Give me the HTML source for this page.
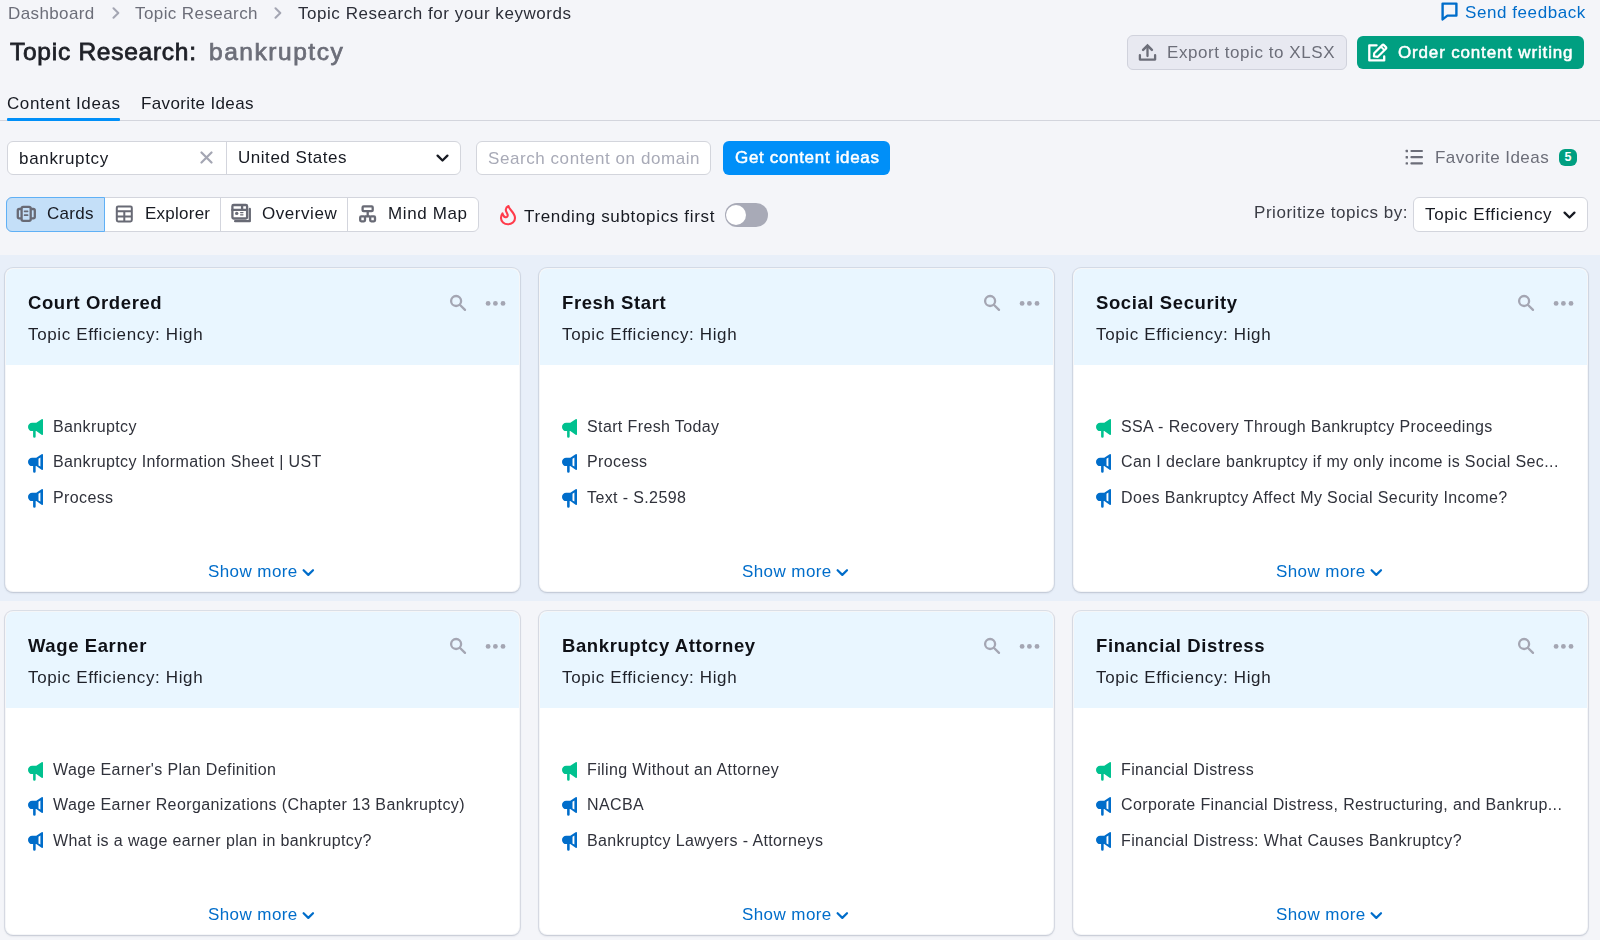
<!DOCTYPE html><html><head><meta charset='utf-8'><style>
*{margin:0;padding:0;box-sizing:content-box}
html,body{width:1600px;height:940px;overflow:hidden;background:#f4f5f9;font-family:"Liberation Sans", sans-serif}
.t{position:absolute;white-space:pre;line-height:1;will-change:transform}
.a{position:absolute;display:block}
.band{position:absolute;left:0;top:255px;width:1600px;height:346px;background:#e8eff9}
.card{position:absolute;background:#fff;border-radius:8px;border:1px solid rgba(120,130,150,.07);box-sizing:border-box;box-shadow:0 0 0 1px rgba(186,192,208,.42),0 1px 2px rgba(140,148,165,.38);overflow:hidden}
.hd{background:#e9f6ff}
</style></head><body><div class='band'></div><svg class='a' style='left:111.5px;top:7px' width='8' height='12' viewBox='0 0 8 12'><path d='M1.5 1.2 L6.3 6 L1.5 10.8' fill='none' stroke='#a4a6b3' stroke-width='2' stroke-linecap='round' stroke-linejoin='round'/></svg><svg class='a' style='left:274px;top:7px' width='8' height='12' viewBox='0 0 8 12'><path d='M1.5 1.2 L6.3 6 L1.5 10.8' fill='none' stroke='#a4a6b3' stroke-width='2' stroke-linecap='round' stroke-linejoin='round'/></svg><div class='a' style='left:0;top:120px;width:1600px;height:1px;background:#d3d5dd'></div><div class='a' style='left:7px;top:118px;width:113px;height:3px;background:#008ff8;border-radius:1px'></div><svg class='a' style='left:1441px;top:2px' width='17' height='19' viewBox='0 0 17 19'><path d='M1.6 1.6 H15.4 V13.6 H6.4 L1.6 17.4 Z' fill='none' stroke='#006dca' stroke-width='2.4' stroke-linejoin='round'/></svg><div class='a' style='left:1126.5px;top:35px;width:218px;height:32.5px;background:#e8e9f1;border:1px solid #d0d2dc;border-radius:6px'></div><svg class='a' style='left:1138px;top:43px' width='19' height='19' viewBox='0 0 19 19'><path d='M9.5 13 V4.5' fill='none' stroke='#6c6e79' stroke-width='2.3' stroke-linecap='round'/><path d='M5.1 6.9 L9.5 2.5 L13.9 6.9' fill='none' stroke='#6c6e79' stroke-width='2.5' stroke-linecap='round' stroke-linejoin='miter'/><path d='M1.9 12.2 V16.6 H17.1 V12.2' fill='none' stroke='#6c6e79' stroke-width='2.3' stroke-linecap='round' stroke-linejoin='round'/></svg><div class='a' style='left:1357px;top:35.5px;width:226.5px;height:33.5px;background:#009f81;border-radius:6px'></div><svg class='a' style='left:1367px;top:43px' width='21' height='20' viewBox='0 0 21 20'><path d='M9.6 2.3 H2.3 V17.4 H17.2 V13.4' fill='none' stroke='#fff' stroke-width='2.3' stroke-linecap='round' stroke-linejoin='round'/><path d='M6.9 13.4 L7.2 10.2 L15.3 2.1 Q16.1 1.3 16.9 2.1 L18.9 4.1 Q19.7 4.9 18.9 5.7 L10.8 13.8 Z' fill='none' stroke='#fff' stroke-width='2.2' stroke-linejoin='round'/><path d='M13.9 3.6 L17.4 7.1' stroke='#fff' stroke-width='2'/></svg><div class='a' style='left:7px;top:140.5px;width:452px;height:32px;background:#fff;border:1px solid #d3d5dc;border-radius:6px'></div><div class='a' style='left:226px;top:141.5px;width:1px;height:32px;background:#d3d5dd'></div><svg class='a' style='left:200px;top:151px' width='13' height='13' viewBox='0 0 13 13'><path d='M1.5 1.5 L11.5 11.5 M11.5 1.5 L1.5 11.5' stroke='#a4a6b3' stroke-width='2.2' stroke-linecap='round'/></svg><svg class='a' style='left:436px;top:154px' width='13' height='9' viewBox='0 0 13 9'><path d='M1.6 1.6 L6.5 6.5 L11.4 1.6' fill='none' stroke='#171a22' stroke-width='2.3' stroke-linecap='round' stroke-linejoin='round'/></svg><div class='a' style='left:475.5px;top:140.5px;width:233px;height:32px;background:#fff;border:1px solid #d3d5dc;border-radius:6px'></div><div class='a' style='left:723px;top:141px;width:167px;height:34px;background:#008ff8;border-radius:6px'></div><svg class='a' style='left:1405px;top:149px' width='19' height='17' viewBox='0 0 19 17'><g fill='#6c6e79'><rect x='0.6' y='0.8' width='2.4' height='2.4' rx='0.5'/><rect x='0.6' y='7' width='2.4' height='2.4' rx='0.5'/><rect x='0.6' y='13.2' width='2.4' height='2.4' rx='0.5'/><rect x='5.4' y='0.9' width='12.6' height='2.2' rx='1'/><rect x='5.4' y='7.1' width='12.6' height='2.2' rx='1'/><rect x='5.4' y='13.3' width='12.6' height='2.2' rx='1'/></g></svg><div class='a' style='left:1559px;top:149px;width:18px;height:17px;background:#009f81;border-radius:6px;color:#fff;font-size:12.5px;font-weight:700;text-align:center;line-height:17px'>5</div><div class='a' style='left:5.5px;top:196.5px;width:471px;height:33px;background:#fff;border:1px solid #d3d5dd;border-radius:6px'></div><div class='a' style='left:5.5px;top:196.5px;width:97px;height:33px;background:#c4dff8;border:1px solid #5fb0f6;border-radius:6px 0 0 6px'></div><div class='a' style='left:220px;top:197.5px;width:1px;height:33px;background:#d3d5dd'></div><div class='a' style='left:347px;top:197.5px;width:1px;height:33px;background:#d3d5dd'></div><svg class='a' style='left:12px;top:200px' width='30' height='28' viewBox='0 0 30 28'><g fill='none' stroke='#686a75' stroke-width='2.3' stroke-linejoin='round'><rect x='9.6' y='6.8' width='9.1' height='14.1' rx='1.6'/><path d='M9.6 9 H7.2 Q5.8 9 5.8 10.4 V17.1 Q5.8 18.4 7.2 18.4 H9.6'/><path d='M18.7 9 H21.3 Q22.8 9 22.8 10.4 V17.1 Q22.8 18.4 21.3 18.4 H18.7'/></g><g stroke='#686a75' stroke-width='1.7' stroke-linecap='round'><path d='M12.6 11.3 H15.6 M12.6 15.2 H15.6'/></g></svg><svg class='a' style='left:110px;top:200px' width='30' height='28' viewBox='0 0 30 28'><g fill='none' stroke='#686a75' stroke-width='2'><rect x='6.8' y='6.4' width='15' height='15' rx='1.3'/><path d='M6.8 11.2 H21.8 M6.8 16.4 H21.8 M14.3 11.2 V21.4'/></g></svg><svg class='a' style='left:226px;top:200px' width='30' height='28' viewBox='0 0 30 28'><g fill='none' stroke='#686a75' stroke-width='2.3' stroke-linejoin='round' stroke-linecap='round'><rect x='6.4' y='5' width='14.7' height='13.5' rx='1.3'/><path d='M6.4 9.9 H21.1 M16.1 5.2 V9.9'/><path d='M23.8 9 V21.2 H9.1'/></g><g fill='#686a75'><circle cx='10.7' cy='13.4' r='1.7'/><rect x='14' y='12' width='3.6' height='1.2' rx='.6'/><rect x='14' y='14.2' width='3.6' height='1.2' rx='.6'/></g></svg><svg class='a' style='left:354px;top:200px' width='30' height='28' viewBox='0 0 30 28'><g fill='none' stroke='#686a75' stroke-width='2.3' stroke-linejoin='round'><rect x='8.6' y='6.4' width='10.1' height='4.8' rx='1'/><path d='M13.7 11.2 V16.4'/><rect x='6.2' y='16.4' width='4.8' height='4.9' rx='1'/><rect x='16.2' y='16.4' width='4.8' height='4.9' rx='1'/><path d='M11 16.4 H16.2'/></g></svg><svg class='a' style='left:494px;top:200px' width='28' height='30' viewBox='0 0 28 30'><path d='M14.5 6 C14.8 9.5 21 12.5 21 18 C21 21.8 17.8 24.3 14 24.3 C10 24.3 7 21.5 7 18 C7 16.2 7.6 14.6 8.5 13.4 C9 15.4 10 17 11.6 17.2 C13.2 17.4 14 16 13.6 14.6 C13 12.6 11.6 11.5 11.8 9.6 C12 7.8 13.2 6.6 14.5 6 Z' fill='none' stroke='#ff3b4b' stroke-width='2.1' stroke-linejoin='round'/></svg><div class='a' style='left:724.5px;top:203px;width:43px;height:24px;background:#a8aab7;border-radius:12px'></div><div class='a' style='left:726.2px;top:205px;width:20px;height:20px;background:#fff;border-radius:50%'></div><div class='a' style='left:1413px;top:197px;width:173px;height:32.5px;background:#fff;border:1px solid #d3d5dd;border-radius:6px'></div><svg class='a' style='left:1563px;top:211px' width='13' height='9' viewBox='0 0 13 9'><path d='M1.6 1.6 L6.5 6.5 L11.4 1.6' fill='none' stroke='#171a22' stroke-width='2.3' stroke-linecap='round' stroke-linejoin='round'/></svg><div class='card' style='left:5px;top:268px;width:515px;height:324px'><div class='hd' style='height:96px'></div></div><svg class='a' style='left:448px;top:292px' width='22' height='22' viewBox='0 0 22 22'><circle cx='8.1' cy='9' r='5' fill='none' stroke='#a4a6b3' stroke-width='2.3'/><path d='M11.8 12.7 L17 17.9' stroke='#a4a6b3' stroke-width='2.3' stroke-linecap='round'/></svg><svg class='a' style='left:483px;top:298px' width='26' height='11' viewBox='0 0 26 11'><g fill='#a4a6b3'><circle cx='5.1' cy='5.4' r='2.4'/><circle cx='12.4' cy='5.4' r='2.4'/><circle cx='20' cy='5.4' r='2.4'/></g></svg><svg class='a' style='left:28.3px;top:418.6px' width='15' height='19' viewBox='0 0 15 19'><path fill-rule='evenodd' d='M4.15 3.8 H8.3 L13.6 0.35 Q15 -0.5 15 1.2 V15 Q15 16.7 13.6 15.8 L8.3 12.1 H7.66 V17.4 A1.28 1.28 0 0 1 5.1 17.4 V12.1 H4.15 A4.15 4.15 0 0 1 4.15 3.8 Z' fill='#00c18f'/></svg><svg class='a' style='left:28.3px;top:453.90000000000003px' width='15' height='19' viewBox='0 0 15 19'><path fill-rule='evenodd' d='M4.15 3.8 H8.3 L13.6 0.35 Q15 -0.5 15 1.2 V15 Q15 16.7 13.6 15.8 L8.3 12.1 H7.66 V17.4 A1.28 1.28 0 0 1 5.1 17.4 V12.1 H4.15 A4.15 4.15 0 0 1 4.15 3.8 Z M10.5 4.7 L12.4 3.6 V12.5 L10.5 11.4 Z' fill='#006dca'/></svg><svg class='a' style='left:28.3px;top:489.20000000000005px' width='15' height='19' viewBox='0 0 15 19'><path fill-rule='evenodd' d='M4.15 3.8 H8.3 L13.6 0.35 Q15 -0.5 15 1.2 V15 Q15 16.7 13.6 15.8 L8.3 12.1 H7.66 V17.4 A1.28 1.28 0 0 1 5.1 17.4 V12.1 H4.15 A4.15 4.15 0 0 1 4.15 3.8 Z M10.5 4.7 L12.4 3.6 V12.5 L10.5 11.4 Z' fill='#006dca'/></svg><svg class='a' style='left:302px;top:568px' width='13' height='10' viewBox='0 0 13 10'><path d='M1.6 2.2 L6.3 6.9 L11 2.2' fill='none' stroke='#006dca' stroke-width='2.2' stroke-linecap='round' stroke-linejoin='round'/></svg><div class='card' style='left:539px;top:268px;width:515px;height:324px'><div class='hd' style='height:96px'></div></div><svg class='a' style='left:982px;top:292px' width='22' height='22' viewBox='0 0 22 22'><circle cx='8.1' cy='9' r='5' fill='none' stroke='#a4a6b3' stroke-width='2.3'/><path d='M11.8 12.7 L17 17.9' stroke='#a4a6b3' stroke-width='2.3' stroke-linecap='round'/></svg><svg class='a' style='left:1017px;top:298px' width='26' height='11' viewBox='0 0 26 11'><g fill='#a4a6b3'><circle cx='5.1' cy='5.4' r='2.4'/><circle cx='12.4' cy='5.4' r='2.4'/><circle cx='20' cy='5.4' r='2.4'/></g></svg><svg class='a' style='left:562.3px;top:418.6px' width='15' height='19' viewBox='0 0 15 19'><path fill-rule='evenodd' d='M4.15 3.8 H8.3 L13.6 0.35 Q15 -0.5 15 1.2 V15 Q15 16.7 13.6 15.8 L8.3 12.1 H7.66 V17.4 A1.28 1.28 0 0 1 5.1 17.4 V12.1 H4.15 A4.15 4.15 0 0 1 4.15 3.8 Z' fill='#00c18f'/></svg><svg class='a' style='left:562.3px;top:453.90000000000003px' width='15' height='19' viewBox='0 0 15 19'><path fill-rule='evenodd' d='M4.15 3.8 H8.3 L13.6 0.35 Q15 -0.5 15 1.2 V15 Q15 16.7 13.6 15.8 L8.3 12.1 H7.66 V17.4 A1.28 1.28 0 0 1 5.1 17.4 V12.1 H4.15 A4.15 4.15 0 0 1 4.15 3.8 Z M10.5 4.7 L12.4 3.6 V12.5 L10.5 11.4 Z' fill='#006dca'/></svg><svg class='a' style='left:562.3px;top:489.20000000000005px' width='15' height='19' viewBox='0 0 15 19'><path fill-rule='evenodd' d='M4.15 3.8 H8.3 L13.6 0.35 Q15 -0.5 15 1.2 V15 Q15 16.7 13.6 15.8 L8.3 12.1 H7.66 V17.4 A1.28 1.28 0 0 1 5.1 17.4 V12.1 H4.15 A4.15 4.15 0 0 1 4.15 3.8 Z M10.5 4.7 L12.4 3.6 V12.5 L10.5 11.4 Z' fill='#006dca'/></svg><svg class='a' style='left:836px;top:568px' width='13' height='10' viewBox='0 0 13 10'><path d='M1.6 2.2 L6.3 6.9 L11 2.2' fill='none' stroke='#006dca' stroke-width='2.2' stroke-linecap='round' stroke-linejoin='round'/></svg><div class='card' style='left:1073px;top:268px;width:515px;height:324px'><div class='hd' style='height:96px'></div></div><svg class='a' style='left:1516px;top:292px' width='22' height='22' viewBox='0 0 22 22'><circle cx='8.1' cy='9' r='5' fill='none' stroke='#a4a6b3' stroke-width='2.3'/><path d='M11.8 12.7 L17 17.9' stroke='#a4a6b3' stroke-width='2.3' stroke-linecap='round'/></svg><svg class='a' style='left:1551px;top:298px' width='26' height='11' viewBox='0 0 26 11'><g fill='#a4a6b3'><circle cx='5.1' cy='5.4' r='2.4'/><circle cx='12.4' cy='5.4' r='2.4'/><circle cx='20' cy='5.4' r='2.4'/></g></svg><svg class='a' style='left:1096.3px;top:418.6px' width='15' height='19' viewBox='0 0 15 19'><path fill-rule='evenodd' d='M4.15 3.8 H8.3 L13.6 0.35 Q15 -0.5 15 1.2 V15 Q15 16.7 13.6 15.8 L8.3 12.1 H7.66 V17.4 A1.28 1.28 0 0 1 5.1 17.4 V12.1 H4.15 A4.15 4.15 0 0 1 4.15 3.8 Z' fill='#00c18f'/></svg><svg class='a' style='left:1096.3px;top:453.90000000000003px' width='15' height='19' viewBox='0 0 15 19'><path fill-rule='evenodd' d='M4.15 3.8 H8.3 L13.6 0.35 Q15 -0.5 15 1.2 V15 Q15 16.7 13.6 15.8 L8.3 12.1 H7.66 V17.4 A1.28 1.28 0 0 1 5.1 17.4 V12.1 H4.15 A4.15 4.15 0 0 1 4.15 3.8 Z M10.5 4.7 L12.4 3.6 V12.5 L10.5 11.4 Z' fill='#006dca'/></svg><svg class='a' style='left:1096.3px;top:489.20000000000005px' width='15' height='19' viewBox='0 0 15 19'><path fill-rule='evenodd' d='M4.15 3.8 H8.3 L13.6 0.35 Q15 -0.5 15 1.2 V15 Q15 16.7 13.6 15.8 L8.3 12.1 H7.66 V17.4 A1.28 1.28 0 0 1 5.1 17.4 V12.1 H4.15 A4.15 4.15 0 0 1 4.15 3.8 Z M10.5 4.7 L12.4 3.6 V12.5 L10.5 11.4 Z' fill='#006dca'/></svg><svg class='a' style='left:1370px;top:568px' width='13' height='10' viewBox='0 0 13 10'><path d='M1.6 2.2 L6.3 6.9 L11 2.2' fill='none' stroke='#006dca' stroke-width='2.2' stroke-linecap='round' stroke-linejoin='round'/></svg><div class='card' style='left:5px;top:611px;width:515px;height:324px'><div class='hd' style='height:96px'></div></div><svg class='a' style='left:448px;top:635px' width='22' height='22' viewBox='0 0 22 22'><circle cx='8.1' cy='9' r='5' fill='none' stroke='#a4a6b3' stroke-width='2.3'/><path d='M11.8 12.7 L17 17.9' stroke='#a4a6b3' stroke-width='2.3' stroke-linecap='round'/></svg><svg class='a' style='left:483px;top:641px' width='26' height='11' viewBox='0 0 26 11'><g fill='#a4a6b3'><circle cx='5.1' cy='5.4' r='2.4'/><circle cx='12.4' cy='5.4' r='2.4'/><circle cx='20' cy='5.4' r='2.4'/></g></svg><svg class='a' style='left:28.3px;top:761.6px' width='15' height='19' viewBox='0 0 15 19'><path fill-rule='evenodd' d='M4.15 3.8 H8.3 L13.6 0.35 Q15 -0.5 15 1.2 V15 Q15 16.7 13.6 15.8 L8.3 12.1 H7.66 V17.4 A1.28 1.28 0 0 1 5.1 17.4 V12.1 H4.15 A4.15 4.15 0 0 1 4.15 3.8 Z' fill='#00c18f'/></svg><svg class='a' style='left:28.3px;top:796.9px' width='15' height='19' viewBox='0 0 15 19'><path fill-rule='evenodd' d='M4.15 3.8 H8.3 L13.6 0.35 Q15 -0.5 15 1.2 V15 Q15 16.7 13.6 15.8 L8.3 12.1 H7.66 V17.4 A1.28 1.28 0 0 1 5.1 17.4 V12.1 H4.15 A4.15 4.15 0 0 1 4.15 3.8 Z M10.5 4.7 L12.4 3.6 V12.5 L10.5 11.4 Z' fill='#006dca'/></svg><svg class='a' style='left:28.3px;top:832.2px' width='15' height='19' viewBox='0 0 15 19'><path fill-rule='evenodd' d='M4.15 3.8 H8.3 L13.6 0.35 Q15 -0.5 15 1.2 V15 Q15 16.7 13.6 15.8 L8.3 12.1 H7.66 V17.4 A1.28 1.28 0 0 1 5.1 17.4 V12.1 H4.15 A4.15 4.15 0 0 1 4.15 3.8 Z M10.5 4.7 L12.4 3.6 V12.5 L10.5 11.4 Z' fill='#006dca'/></svg><svg class='a' style='left:302px;top:911px' width='13' height='10' viewBox='0 0 13 10'><path d='M1.6 2.2 L6.3 6.9 L11 2.2' fill='none' stroke='#006dca' stroke-width='2.2' stroke-linecap='round' stroke-linejoin='round'/></svg><div class='card' style='left:539px;top:611px;width:515px;height:324px'><div class='hd' style='height:96px'></div></div><svg class='a' style='left:982px;top:635px' width='22' height='22' viewBox='0 0 22 22'><circle cx='8.1' cy='9' r='5' fill='none' stroke='#a4a6b3' stroke-width='2.3'/><path d='M11.8 12.7 L17 17.9' stroke='#a4a6b3' stroke-width='2.3' stroke-linecap='round'/></svg><svg class='a' style='left:1017px;top:641px' width='26' height='11' viewBox='0 0 26 11'><g fill='#a4a6b3'><circle cx='5.1' cy='5.4' r='2.4'/><circle cx='12.4' cy='5.4' r='2.4'/><circle cx='20' cy='5.4' r='2.4'/></g></svg><svg class='a' style='left:562.3px;top:761.6px' width='15' height='19' viewBox='0 0 15 19'><path fill-rule='evenodd' d='M4.15 3.8 H8.3 L13.6 0.35 Q15 -0.5 15 1.2 V15 Q15 16.7 13.6 15.8 L8.3 12.1 H7.66 V17.4 A1.28 1.28 0 0 1 5.1 17.4 V12.1 H4.15 A4.15 4.15 0 0 1 4.15 3.8 Z' fill='#00c18f'/></svg><svg class='a' style='left:562.3px;top:796.9px' width='15' height='19' viewBox='0 0 15 19'><path fill-rule='evenodd' d='M4.15 3.8 H8.3 L13.6 0.35 Q15 -0.5 15 1.2 V15 Q15 16.7 13.6 15.8 L8.3 12.1 H7.66 V17.4 A1.28 1.28 0 0 1 5.1 17.4 V12.1 H4.15 A4.15 4.15 0 0 1 4.15 3.8 Z M10.5 4.7 L12.4 3.6 V12.5 L10.5 11.4 Z' fill='#006dca'/></svg><svg class='a' style='left:562.3px;top:832.2px' width='15' height='19' viewBox='0 0 15 19'><path fill-rule='evenodd' d='M4.15 3.8 H8.3 L13.6 0.35 Q15 -0.5 15 1.2 V15 Q15 16.7 13.6 15.8 L8.3 12.1 H7.66 V17.4 A1.28 1.28 0 0 1 5.1 17.4 V12.1 H4.15 A4.15 4.15 0 0 1 4.15 3.8 Z M10.5 4.7 L12.4 3.6 V12.5 L10.5 11.4 Z' fill='#006dca'/></svg><svg class='a' style='left:836px;top:911px' width='13' height='10' viewBox='0 0 13 10'><path d='M1.6 2.2 L6.3 6.9 L11 2.2' fill='none' stroke='#006dca' stroke-width='2.2' stroke-linecap='round' stroke-linejoin='round'/></svg><div class='card' style='left:1073px;top:611px;width:515px;height:324px'><div class='hd' style='height:96px'></div></div><svg class='a' style='left:1516px;top:635px' width='22' height='22' viewBox='0 0 22 22'><circle cx='8.1' cy='9' r='5' fill='none' stroke='#a4a6b3' stroke-width='2.3'/><path d='M11.8 12.7 L17 17.9' stroke='#a4a6b3' stroke-width='2.3' stroke-linecap='round'/></svg><svg class='a' style='left:1551px;top:641px' width='26' height='11' viewBox='0 0 26 11'><g fill='#a4a6b3'><circle cx='5.1' cy='5.4' r='2.4'/><circle cx='12.4' cy='5.4' r='2.4'/><circle cx='20' cy='5.4' r='2.4'/></g></svg><svg class='a' style='left:1096.3px;top:761.6px' width='15' height='19' viewBox='0 0 15 19'><path fill-rule='evenodd' d='M4.15 3.8 H8.3 L13.6 0.35 Q15 -0.5 15 1.2 V15 Q15 16.7 13.6 15.8 L8.3 12.1 H7.66 V17.4 A1.28 1.28 0 0 1 5.1 17.4 V12.1 H4.15 A4.15 4.15 0 0 1 4.15 3.8 Z' fill='#00c18f'/></svg><svg class='a' style='left:1096.3px;top:796.9px' width='15' height='19' viewBox='0 0 15 19'><path fill-rule='evenodd' d='M4.15 3.8 H8.3 L13.6 0.35 Q15 -0.5 15 1.2 V15 Q15 16.7 13.6 15.8 L8.3 12.1 H7.66 V17.4 A1.28 1.28 0 0 1 5.1 17.4 V12.1 H4.15 A4.15 4.15 0 0 1 4.15 3.8 Z M10.5 4.7 L12.4 3.6 V12.5 L10.5 11.4 Z' fill='#006dca'/></svg><svg class='a' style='left:1096.3px;top:832.2px' width='15' height='19' viewBox='0 0 15 19'><path fill-rule='evenodd' d='M4.15 3.8 H8.3 L13.6 0.35 Q15 -0.5 15 1.2 V15 Q15 16.7 13.6 15.8 L8.3 12.1 H7.66 V17.4 A1.28 1.28 0 0 1 5.1 17.4 V12.1 H4.15 A4.15 4.15 0 0 1 4.15 3.8 Z M10.5 4.7 L12.4 3.6 V12.5 L10.5 11.4 Z' fill='#006dca'/></svg><svg class='a' style='left:1370px;top:911px' width='13' height='10' viewBox='0 0 13 10'><path d='M1.6 2.2 L6.3 6.9 L11 2.2' fill='none' stroke='#006dca' stroke-width='2.2' stroke-linecap='round' stroke-linejoin='round'/></svg><div class='t' style='left:7.75px;top:4.51px;font-size:17px;font-weight:400;color:#6c6e79;letter-spacing:0.385px;'>Dashboard</div><div class='t' style='left:135.00px;top:4.61px;font-size:17px;font-weight:400;color:#6c6e79;letter-spacing:0.410px;'>Topic Research</div><div class='t' style='left:298.25px;top:4.61px;font-size:17px;font-weight:400;color:#2b2e38;letter-spacing:0.547px;'>Topic Research for your keywords</div><div class='t' style='left:10.25px;top:40.16px;font-size:24.5px;font-weight:400;color:#1e2027;letter-spacing:0.738px;-webkit-text-stroke:0.8px #1e2027'>Topic Research:</div><div class='t' style='left:208.75px;top:40.16px;font-size:24.5px;font-weight:400;color:#6c6e79;letter-spacing:1.543px;-webkit-text-stroke:0.75px #6c6e79'>bankruptcy</div><div class='t' style='left:7.00px;top:94.51px;font-size:17px;font-weight:400;color:#171a22;letter-spacing:0.595px;'>Content Ideas</div><div class='t' style='left:141.00px;top:94.51px;font-size:17px;font-weight:400;color:#171a22;letter-spacing:0.367px;'>Favorite Ideas</div><div class='t' style='left:1465.30px;top:3.51px;font-size:17px;font-weight:400;color:#006dca;letter-spacing:0.573px;'>Send feedback</div><div class='t' style='left:1167.00px;top:43.76px;font-size:17px;font-weight:400;color:#6c6e79;letter-spacing:0.559px;'>Export topic to XLSX</div><div class='t' style='left:1397.70px;top:44.11px;font-size:17px;font-weight:400;color:#ffffff;letter-spacing:0.835px;-webkit-text-stroke:0.5px #fff'>Order content writing</div><div class='t' style='left:18.75px;top:149.81px;font-size:17px;font-weight:400;color:#171a22;letter-spacing:0.675px;'>bankruptcy</div><div class='t' style='left:238.00px;top:149.41px;font-size:17px;font-weight:400;color:#171a22;letter-spacing:0.536px;'>United States</div><div class='t' style='left:487.50px;top:149.61px;font-size:17px;font-weight:400;color:#a8aab7;letter-spacing:0.567px;'>Search content on domain</div><div class='t' style='left:735.00px;top:149.41px;font-size:17px;font-weight:400;color:#ffffff;letter-spacing:0.671px;-webkit-text-stroke:0.5px #fff'>Get content ideas</div><div class='t' style='left:1435.30px;top:149.01px;font-size:17px;font-weight:400;color:#6c6e79;letter-spacing:0.459px;'>Favorite Ideas</div><div class='t' style='left:46.80px;top:205.31px;font-size:17px;font-weight:400;color:#171a22;letter-spacing:0.285px;'>Cards</div><div class='t' style='left:144.70px;top:205.31px;font-size:17px;font-weight:400;color:#171a22;letter-spacing:0.241px;'>Explorer</div><div class='t' style='left:262.00px;top:205.31px;font-size:17px;font-weight:400;color:#171a22;letter-spacing:0.549px;'>Overview</div><div class='t' style='left:388.00px;top:205.31px;font-size:17px;font-weight:400;color:#171a22;letter-spacing:0.623px;'>Mind Map</div><div class='t' style='left:523.50px;top:208.21px;font-size:17px;font-weight:400;color:#171a22;letter-spacing:0.664px;'>Trending subtopics first</div><div class='t' style='left:1254.00px;top:204.01px;font-size:17px;font-weight:400;color:#3a3c45;letter-spacing:0.546px;'>Prioritize topics by:</div><div class='t' style='left:1425.00px;top:206.41px;font-size:17px;font-weight:400;color:#171a22;letter-spacing:0.649px;'>Topic Efficiency</div><div class='t' style='left:27.60px;top:294.24px;font-size:18.5px;font-weight:700;color:#0f1117;letter-spacing:0.600px;'>Court Ordered</div><div class='t' style='left:27.60px;top:326.01px;font-size:17px;font-weight:400;color:#1f2129;letter-spacing:0.635px;'>Topic Efficiency: High</div><div class='t' style='left:52.50px;top:419.05px;font-size:16px;font-weight:400;color:#30323b;letter-spacing:0.380px;'>Bankruptcy</div><div class='t' style='left:52.50px;top:454.35px;font-size:16px;font-weight:400;color:#30323b;letter-spacing:0.380px;'>Bankruptcy Information Sheet | UST</div><div class='t' style='left:52.50px;top:489.65px;font-size:16px;font-weight:400;color:#30323b;letter-spacing:0.380px;'>Process</div><div class='t' style='left:208.30px;top:563.41px;font-size:17px;font-weight:400;color:#006dca;letter-spacing:0.414px;'>Show more</div><div class='t' style='left:561.60px;top:294.24px;font-size:18.5px;font-weight:700;color:#0f1117;letter-spacing:0.600px;'>Fresh Start</div><div class='t' style='left:561.60px;top:326.01px;font-size:17px;font-weight:400;color:#1f2129;letter-spacing:0.635px;'>Topic Efficiency: High</div><div class='t' style='left:586.50px;top:419.05px;font-size:16px;font-weight:400;color:#30323b;letter-spacing:0.380px;'>Start Fresh Today</div><div class='t' style='left:586.50px;top:454.35px;font-size:16px;font-weight:400;color:#30323b;letter-spacing:0.380px;'>Process</div><div class='t' style='left:586.50px;top:489.65px;font-size:16px;font-weight:400;color:#30323b;letter-spacing:0.380px;'>Text - S.2598</div><div class='t' style='left:742.30px;top:563.41px;font-size:17px;font-weight:400;color:#006dca;letter-spacing:0.414px;'>Show more</div><div class='t' style='left:1095.60px;top:294.24px;font-size:18.5px;font-weight:700;color:#0f1117;letter-spacing:0.600px;'>Social Security</div><div class='t' style='left:1095.60px;top:326.01px;font-size:17px;font-weight:400;color:#1f2129;letter-spacing:0.635px;'>Topic Efficiency: High</div><div class='t' style='left:1120.50px;top:419.05px;font-size:16px;font-weight:400;color:#30323b;letter-spacing:0.380px;'>SSA - Recovery Through Bankruptcy Proceedings</div><div class='t' style='left:1120.50px;top:454.35px;font-size:16px;font-weight:400;color:#30323b;letter-spacing:0.380px;'>Can I declare bankruptcy if my only income is Social Sec...</div><div class='t' style='left:1120.50px;top:489.65px;font-size:16px;font-weight:400;color:#30323b;letter-spacing:0.380px;'>Does Bankruptcy Affect My Social Security Income?</div><div class='t' style='left:1276.30px;top:563.41px;font-size:17px;font-weight:400;color:#006dca;letter-spacing:0.414px;'>Show more</div><div class='t' style='left:27.60px;top:637.24px;font-size:18.5px;font-weight:700;color:#0f1117;letter-spacing:0.600px;'>Wage Earner</div><div class='t' style='left:27.60px;top:669.01px;font-size:17px;font-weight:400;color:#1f2129;letter-spacing:0.635px;'>Topic Efficiency: High</div><div class='t' style='left:52.50px;top:762.05px;font-size:16px;font-weight:400;color:#30323b;letter-spacing:0.380px;'>Wage Earner&#x27;s Plan Definition</div><div class='t' style='left:52.50px;top:797.35px;font-size:16px;font-weight:400;color:#30323b;letter-spacing:0.380px;'>Wage Earner Reorganizations (Chapter 13 Bankruptcy)</div><div class='t' style='left:52.50px;top:832.65px;font-size:16px;font-weight:400;color:#30323b;letter-spacing:0.380px;'>What is a wage earner plan in bankruptcy?</div><div class='t' style='left:208.30px;top:906.41px;font-size:17px;font-weight:400;color:#006dca;letter-spacing:0.414px;'>Show more</div><div class='t' style='left:561.60px;top:637.24px;font-size:18.5px;font-weight:700;color:#0f1117;letter-spacing:0.600px;'>Bankruptcy Attorney</div><div class='t' style='left:561.60px;top:669.01px;font-size:17px;font-weight:400;color:#1f2129;letter-spacing:0.635px;'>Topic Efficiency: High</div><div class='t' style='left:586.50px;top:762.05px;font-size:16px;font-weight:400;color:#30323b;letter-spacing:0.380px;'>Filing Without an Attorney</div><div class='t' style='left:586.50px;top:797.35px;font-size:16px;font-weight:400;color:#30323b;letter-spacing:0.380px;'>NACBA</div><div class='t' style='left:586.50px;top:832.65px;font-size:16px;font-weight:400;color:#30323b;letter-spacing:0.380px;'>Bankruptcy Lawyers - Attorneys</div><div class='t' style='left:742.30px;top:906.41px;font-size:17px;font-weight:400;color:#006dca;letter-spacing:0.414px;'>Show more</div><div class='t' style='left:1095.60px;top:637.24px;font-size:18.5px;font-weight:700;color:#0f1117;letter-spacing:0.600px;'>Financial Distress</div><div class='t' style='left:1095.60px;top:669.01px;font-size:17px;font-weight:400;color:#1f2129;letter-spacing:0.635px;'>Topic Efficiency: High</div><div class='t' style='left:1120.50px;top:762.05px;font-size:16px;font-weight:400;color:#30323b;letter-spacing:0.380px;'>Financial Distress</div><div class='t' style='left:1120.50px;top:797.35px;font-size:16px;font-weight:400;color:#30323b;letter-spacing:0.380px;'>Corporate Financial Distress, Restructuring, and Bankrup...</div><div class='t' style='left:1120.50px;top:832.65px;font-size:16px;font-weight:400;color:#30323b;letter-spacing:0.380px;'>Financial Distress: What Causes Bankruptcy?</div><div class='t' style='left:1276.30px;top:906.41px;font-size:17px;font-weight:400;color:#006dca;letter-spacing:0.414px;'>Show more</div></body></html>
